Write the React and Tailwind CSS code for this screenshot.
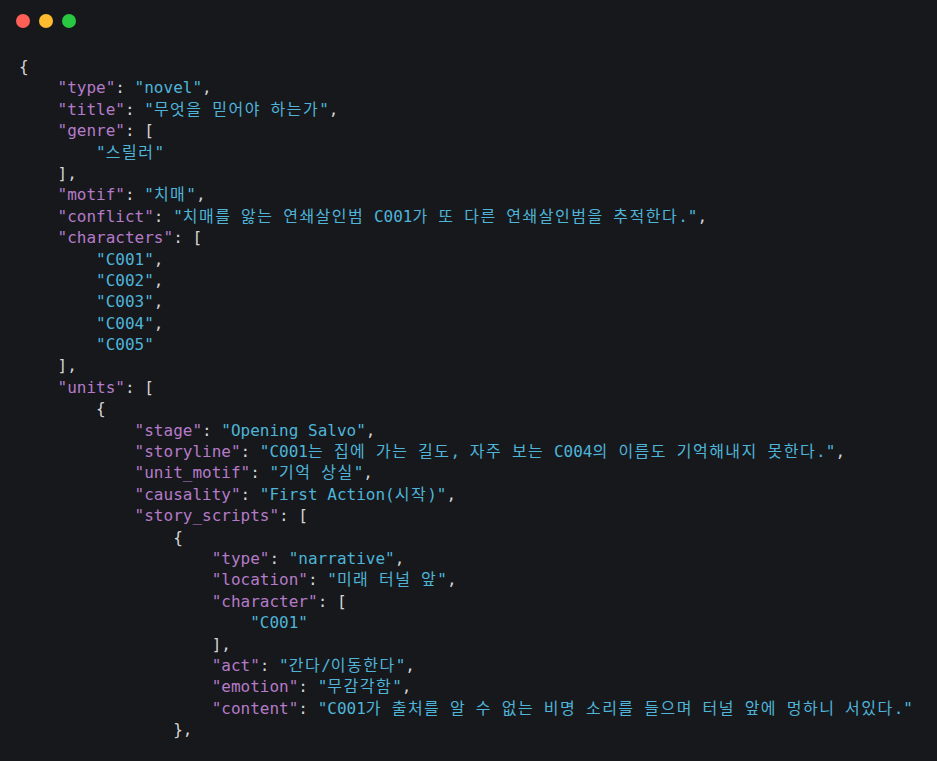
import React from "react";

const fix = (s) =>
  s.split(/([\uAC00-\uD7A3]+)/).map((p, i) =>
    /[\uAC00-\uD7A3]/.test(p) ? (
      <span key={i} className="tracking-[1.5px]">{p}</span>
    ) : (
      p
    )
  );

const K = ({ children }) => <span className="text-[#b57bc8]">{children}</span>;
const V = ({ children }) => <span className="text-[#4fb4d8]">{fix(children)}</span>;

const lines = [
  [0, <>{"{"}</>],
  [1, <><K>"type"</K>: <V>"novel"</V>,</>],
  [1, <><K>"title"</K>: <V>"무엇을 믿어야 하는가"</V>,</>],
  [1, <><K>"genre"</K>: [</>],
  [2, <><V>"스릴러"</V></>],
  [1, <>],</>],
  [1, <><K>"motif"</K>: <V>"치매"</V>,</>],
  [1, <><K>"conflict"</K>: <V>"치매를 앓는 연쇄살인범 C001가 또 다른 연쇄살인범을 추적한다."</V>,</>],
  [1, <><K>"characters"</K>: [</>],
  [2, <><V>"C001"</V>,</>],
  [2, <><V>"C002"</V>,</>],
  [2, <><V>"C003"</V>,</>],
  [2, <><V>"C004"</V>,</>],
  [2, <><V>"C005"</V></>],
  [1, <>],</>],
  [1, <><K>"units"</K>: [</>],
  [2, <>{"{"}</>],
  [3, <><K>"stage"</K>: <V>"Opening Salvo"</V>,</>],
  [3, <><K>"storyline"</K>: <V>"C001는 집에 가는 길도, 자주 보는 C004의 이름도 기억해내지 못한다."</V>,</>],
  [3, <><K>"unit_motif"</K>: <V>"기억 상실"</V>,</>],
  [3, <><K>"causality"</K>: <V>"First Action(시작)"</V>,</>],
  [3, <><K>"story_scripts"</K>: [</>],
  [4, <>{"{"}</>],
  [5, <><K>"type"</K>: <V>"narrative"</V>,</>],
  [5, <><K>"location"</K>: <V>"미래 터널 앞"</V>,</>],
  [5, <><K>"character"</K>: [</>],
  [6, <><V>"C001"</V></>],
  [5, <>],</>],
  [5, <><K>"act"</K>: <V>"간다/이동한다"</V>,</>],
  [5, <><K>"emotion"</K>: <V>"무감각함"</V>,</>],
  [5, <><K>"content"</K>: <V>"C001가 출처를 알 수 없는 비명 소리를 들으며 터널 앞에 멍하니 서있다."</V></>],
  [4, <>{"},"}</>],
];

export default function App() {
  return (
    <div className="w-[937px] h-[761px] overflow-hidden bg-[#16181c]">
      <div className="flex gap-[9px] pl-[16px] pt-[14px]">
        <span className="block w-[14px] h-[14px] rounded-full bg-[#fe5f57]" />
        <span className="block w-[14px] h-[14px] rounded-full bg-[#febc2e]" />
        <span className="block w-[14px] h-[14px] rounded-full bg-[#28c840]" />
      </div>
      <pre
        className="mt-[28px] pl-[19px] text-[16px] leading-[21.4px] text-[#d4d4d4] whitespace-pre"
        style={{ fontFamily: '"DejaVu Sans Mono", "Noto Sans CJK KR", monospace' }}
      >
        {lines.map(([ind, c], i) => (
          <div key={i} className="h-[21.4px] overflow-visible">
            {"    ".repeat(ind)}
            {c}
          </div>
        ))}
      </pre>
    </div>
  );
}
